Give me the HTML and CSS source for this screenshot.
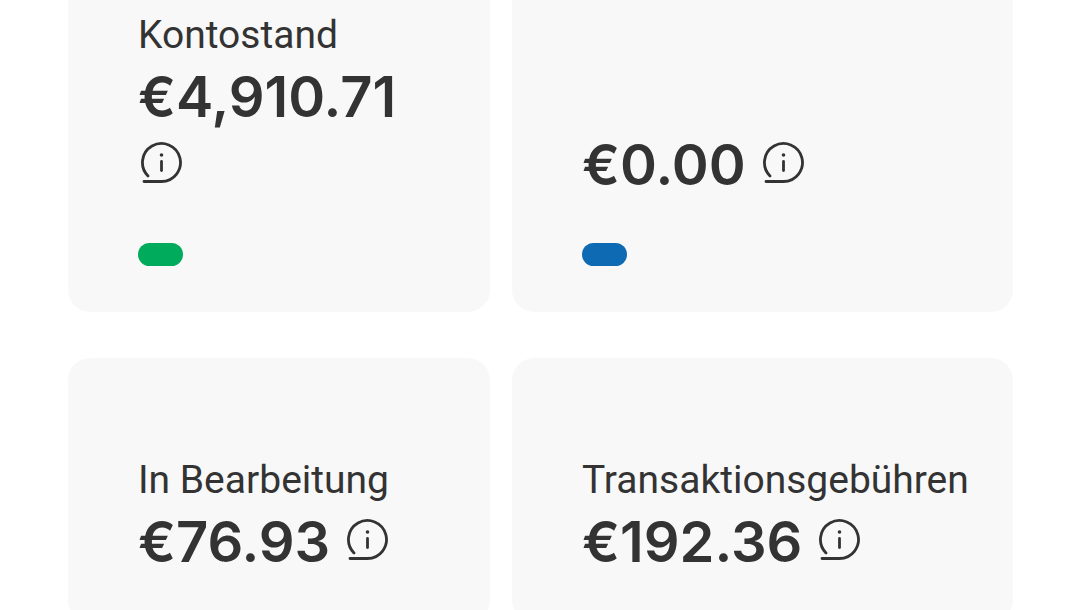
FILE: index.html
```html
<!DOCTYPE html>
<html lang="de">
<head>
  <meta charset="UTF-8">
  <meta name="viewport" content="width=device-width, initial-scale=1.0">
  <title>Kontostand</title>
  <link rel="stylesheet" href="styles.css">
</head>
<body>
  <svg class="sprite" aria-hidden="true">
    <symbol id="info" viewBox="0 0 44 44">
      <path d="M6 40.500H23.500A19 19 0 1 0 10 34.900" fill="none" stroke="currentColor" stroke-width="2.800" stroke-linecap="round"/>
      <path d="M23.500 20.500V29.500" stroke="currentColor" stroke-width="2.800" stroke-linecap="round"/>
      <circle cx="23.500" cy="14" r="1.800" fill="currentColor"/>
    </symbol>
  </svg>

  <main class="cards">
    <section class="card card-top">
      <h2 class="label">Kontostand</h2>
      <p class="amount">€4,910.71 <button class="info" aria-label="Info Kontostand"><svg><use href="#info"/></svg></button></p>
      <span class="dot green"></span>
    </section>

    <section class="card card-top">
      <p class="amount">€0.00 <button class="info" aria-label="Info"><svg><use href="#info"/></svg></button></p>
      <span class="dot blue"></span>
    </section>

    <section class="card">
      <h2 class="label">In Bearbeitung</h2>
      <p class="amount">€76.93 <button class="info" aria-label="Info In Bearbeitung"><svg><use href="#info"/></svg></button></p>
    </section>

    <section class="card">
      <h2 class="label">Transaktionsgebühren</h2>
      <p class="amount">€192.36 <button class="info" aria-label="Info Transaktionsgebühren"><svg><use href="#info"/></svg></button></p>
    </section>
  </main>
</body>
</html>
```

FILE: styles.css
```css
body {
  margin: 0;
  background: #fff;
  color: #333;
  font-family: Inter, "Liberation Sans", sans-serif;
  overflow: hidden;
}

.sprite {
  display: none;
}

.cards {
  display: grid;
  grid-template-columns: 422fr 501fr;
  gap: 46px 22px;
  padding: 0 67px 0 68px;
}

.card {
  box-sizing: border-box;
  min-width: 0;
  padding: 98px 44px 46px 70px;
  border-radius: 22px;
  background: #f8f8f8;
}

.card-top {
  display: flex;
  flex-direction: column;
  justify-content: flex-end;
  align-items: flex-start;
  padding-top: 11px;
  border-radius: 0 0 22px 22px;
}

.label {
  margin: 0;
  font-family: Roboto, sans-serif;
  font-size: 39px;
  font-weight: 400;
  line-height: 48px;
}

.amount {
  margin: 4px 0 0;
  font-size: 56px;
  font-weight: 600;
  line-height: 68px;
}

.info {
  width: 44px;
  height: 44px;
  padding: 0;
  border: 0;
  background: none;
  color: inherit;
  cursor: pointer;
}

.info svg {
  display: block;
  width: 44px;
  height: 44px;
}

.dot {
  width: 45px;
  height: 23px;
  margin-top: 44px;
  border-radius: 12px;
}

.green {
  background: #00ab5b;
}

.blue {
  background: #0f6ab4;
}
```
